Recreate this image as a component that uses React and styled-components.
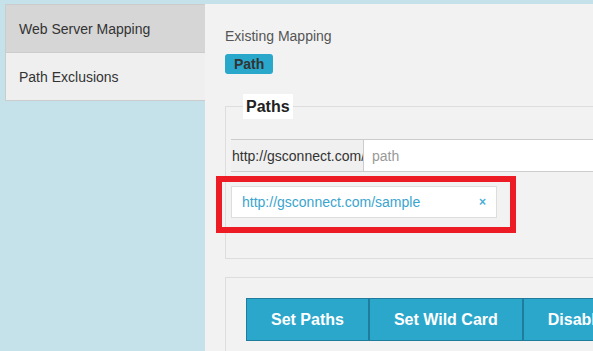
import React from "react";
import styled, { createGlobalStyle } from "styled-components";

const GlobalStyle = createGlobalStyle`
  html, body {
    margin: 0;
    padding: 0;
    background-color: #c5e1ea;
    font-family: "Liberation Sans", Arial, sans-serif;
    overflow: hidden;
  }
`;

const Page = styled.div`
  display: flex;
  align-items: flex-start;
  padding: 4px 0 0 5px;
  min-height: 100vh;
  box-sizing: border-box;
`;

const Sidebar = styled.ul`
  list-style: none;
  margin: 0;
  padding: 0;
  width: 200px;
  flex-shrink: 0;
  border: 1px solid #cccccc;
  border-right: none;
  box-sizing: border-box;
`;

const SideItem = styled.li`
  padding: 14px 13px 13px;
  line-height: 20px;
  font-size: 14px;
  color: #333;
  background-color: ${(p) => (p.$active ? "#d6d6d6" : "#efefef")};
  border-bottom: 1px solid #cccccc;
  cursor: pointer;

  &:last-child {
    border-bottom: none;
  }
`;

const Main = styled.div`
  flex: 1;
  min-width: 0;
  align-self: stretch;
  background-color: #f2f2f2;
  padding: 22px 0 20px 20px;
  min-height: 100vh;
  box-sizing: border-box;
`;

const Title = styled.div`
  font-size: 14px;
  line-height: 20px;
  color: #555;
`;

const Badge = styled.span`
  display: inline-block;
  margin-top: 8px;
  padding: 0 9px;
  height: 20px;
  line-height: 20px;
  border-radius: 3px;
  background-color: #29a8cc;
  color: #333;
  font-size: 14px;
  font-weight: bold;
`;

const Fieldset = styled.fieldset`
  margin: 20px 0 0;
  width: 600px;
  border: 1px solid #dddddd;
  padding: 20px 0 40px 5px;
  min-width: 0;
`;

const Legend = styled.legend`
  margin-left: 12px;
  padding: 0 3px;
  background-color: #fff;
  font-size: 16px;
  font-weight: bold;
  line-height: 25px;
  color: #222;
`;

const InputGroup = styled.div`
  display: flex;
  height: 33px;
`;

const Addon = styled.span`
  display: flex;
  align-items: center;
  width: 133px;
  flex-shrink: 0;
  padding-left: 1px;
  box-sizing: border-box;
  border: 1px solid #cccccc;
  border-left: none;
  background-color: #f0f0f0;
  color: #333;
  font-size: 14px;
  white-space: nowrap;
  overflow: hidden;
`;

const PathInput = styled.input`
  flex: 1;
  min-width: 0;
  border: 1px solid #cccccc;
  border-left: none;
  padding: 0 8px;
  background: #fff;
  font-family: inherit;
  font-size: 14px;
  color: #333;
  outline: none;

  &::placeholder {
    color: #999;
  }
`;

const TagRow = styled.div`
  position: relative;
  margin-top: 14px;
  width: 266px;
`;

const Tag = styled.div`
  display: flex;
  align-items: center;
  justify-content: space-between;
  height: 32px;
  padding: 0 10px;
  box-sizing: border-box;
  border: 1px solid #dddddd;
  background-color: #fff;
  color: #3aa4cf;
  font-size: 14px;
`;

const Remove = styled.span`
  font-size: 12px;
  font-weight: bold;
  color: #4aaed6;
  cursor: pointer;
`;

const Highlight = styled.div`
  position: absolute;
  left: -15px;
  top: -10px;
  width: 300px;
  height: 57px;
  border: 6px solid #ed1c24;
  box-sizing: border-box;
  pointer-events: none;
`;

const ActionBox = styled.div`
  margin-top: 18px;
  width: 600px;
  border: 1px solid #dddddd;
  border-bottom: none;
  padding: 20px 0 20px 20px;
`;

const ButtonGroup = styled.div`
  display: flex;
`;

const Button = styled.button`
  height: 43px;
  padding: 0 24px;
  border: 1px solid #1f7c9d;
  background-color: #2ba7cc;
  color: #fff;
  font-family: inherit;
  font-size: 16px;
  font-weight: bold;
  white-space: nowrap;
  cursor: pointer;
`;

const App = () => {
  return (
    <>
      <GlobalStyle />
      <Page>
        <Sidebar>
          <SideItem $active>Web Server Mapping</SideItem>
          <SideItem>Path Exclusions</SideItem>
        </Sidebar>
        <Main>
          <Title>Existing Mapping</Title>
          <Badge>Path</Badge>
          <Fieldset>
            <Legend>Paths</Legend>
            <InputGroup>
              <Addon>http://gsconnect.com/</Addon>
              <PathInput placeholder="path" />
            </InputGroup>
            <TagRow>
              <Tag>
                <span>http://gsconnect.com/sample</span>
                <Remove>×</Remove>
              </Tag>
              <Highlight />
            </TagRow>
          </Fieldset>
          <ActionBox>
            <ButtonGroup>
              <Button>Set Paths</Button>
              <Button>Set Wild Card</Button>
              <Button>Disable Paths</Button>
            </ButtonGroup>
          </ActionBox>
        </Main>
      </Page>
    </>
  );
};

export default App;
